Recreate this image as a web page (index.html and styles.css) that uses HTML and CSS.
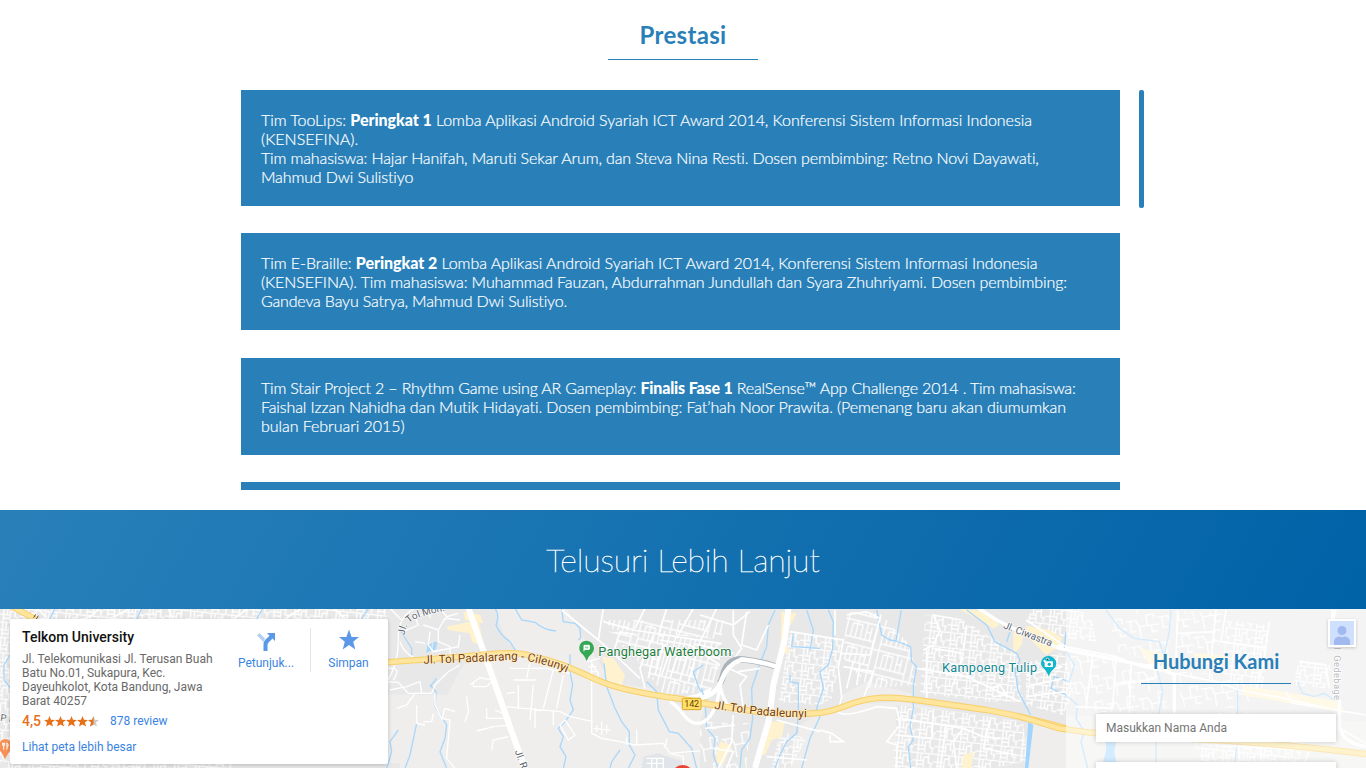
FILE: index.html
```html
<!DOCTYPE html>
<html lang="id">
<head>
<meta charset="utf-8">
<title>Prestasi</title>
<link rel="stylesheet" href="styles.css">
</head>
<body>
<section class="awards">
  <h2 class="heading">Prestasi</h2>
  <div class="awards-view">
    <div class="award-list">
      <p class="award"><span class="snug">Tim TooLips: <b>Peringkat 1</b> Lomba Aplikasi Android Syariah ICT Award 2014, Konferensi Sistem Informasi Indonesia</span> (KENSEFINA).<br><span class="firm">Tim mahasiswa: Hajar Hanifah, Maruti Sekar Arum, dan Steva Nina Resti. Dosen pembimbing: Retno Novi Dayawati,<br>Mahmud Dwi Sulistiyo</span></p>
      <p class="award"><span class="snug">Tim E-Braille: <b>Peringkat 2</b> Lomba Aplikasi Android Syariah ICT Award 2014, Konferensi Sistem Informasi Indonesia</span><br><span class="close">(KENSEFINA). Tim mahasiswa: Muhammad Fauzan, Abdurrahman Jundullah dan Syara Zhuhriyami. Dosen pembimbing:</span><br><span class="tight">Gandeva Bayu Satrya, Mahmud Dwi Sulistiyo.</span></p>
      <p class="award"><span class="tight">Tim Stair Project 2 – Rhythm Game using AR Gameplay: <b>Finalis Fase 1</b> RealSense™ App Challenge 2014 . Tim mahasiswa:</span><br><span class="close">Faishal Izzan Nahidha dan Mutik Hidayati. Dosen pembimbing: Fat’hah Noor Prawita. (Pemenang baru akan diumumkan</span><br><span class="snug">bulan Februari 2015)</span></p>
      <p class="award"></p>
    </div>
    <div class="scroll-thumb"></div>
  </div>
</section>
<section class="more">Telusuri Lebih Lanjut</section>
<section class="location">
  <svg class="map" viewBox="0 609 1366 159" width="1366" height="159">
    <defs>
      <pattern id="streets" width="62" height="46" patternUnits="userSpaceOnUse" patternTransform="rotate(6)">
        <path d="M0 4H62M0 27H34M14 4V46M34 15V46M48 4V32H62M34 15H48M14 38H34M25 4V27M56 32V46" class="st"/>
      </pattern>
      <pattern id="rows" width="110" height="72" patternUnits="userSpaceOnUse" patternTransform="rotate(14)">
        <path d="M0 3H110M4 3V72M20 12V54M34 3V54M50 12V54M64 3V54M78 12V54M94 3V72M4 54H94M20 12H50M64 30H78" class="st"/>
      </pattern>
      <pattern id="loose" width="96" height="78" patternUnits="userSpaceOnUse" patternTransform="rotate(-9)">
        <path d="M0 20H30L38 40H96M38 40V78M62 8V40M62 8H84V24M12 20V52H26M74 40V60H90" class="st"/>
      </pattern>
      <path id="cileunyi" d="M130 176Q290 172 400 164Q480 168 568 206"/>
      <path id="padaleunyi" d="M42 311Q120 324 190 331T360 337"/>
      <path id="tolmoh" d="M74 91Q75 55 110 40T226 12"/>
    </defs>
    <rect y="609" width="1366" height="159" fill="#efeeed"/>

    <!-- western edge -->
    <g transform="translate(0 605) scale(.33333)">
      <path d="M0 0H1200V45H0ZM0 45H32V489H0ZM0 475H1200V489H0Z" fill="#e8e8e8"/>
      <path d="M0 0H1200V45H0ZM0 45H32V489H0ZM0 475H700V489H0Z" fill="url(#streets)"/>
      <path d="M110 10L145 42M230 45Q280 40 295 10M330 42L390 10M520 45L505 10M700 42L745 10M850 45L905 10M1000 10L1040 45" class="st main"/>
      <path d="M165 10L150 42M425 10L410 44M788 10L770 42M1105 10L1085 42M30 150L12 180V225L32 250" class="river"/>
      <path d="M28 0L105 42" class="toll-edge"/><path d="M28 0L105 42" class="toll"/>
      <path d="M101 38L107 28M109 42L115 32" stroke="#6b4a2b" stroke-width="3"/>
      <path d="M15 462L4 442Q-7 430-2 416Q4 402 16 402Q35 405 35 423Q35 435 25 445Z" fill="#f99157"/>
      <path d="M8 413V421Q11 426 14 421V413M11 414V434M21 413V434M21 414Q26 418 24 424H21" fill="none" stroke="#fff" stroke-width="3"/>
    </g>

    <!-- central area -->
    <g transform="translate(380 605) scale(.33333)">
      <path d="M20 0H345Q358 90 405 132L340 150L250 180L200 270L20 268Z" fill="#e8e8e8"/>
      <path d="M555 0H1040V300H900L820 250L700 235L650 160L600 80Z" fill="#e8e8e8"/>
      <path d="M790 455L835 445L910 470L920 490H785Z" fill="#e1e4e8"/>
      <path d="M670 45H1040V105L820 85L700 75Z" fill="url(#rows)"/>
      <path d="M685 80L820 85L1020 115V260L850 270L795 190Z" fill="url(#rows)"/>
      <path d="M200 65L295 45L312 125L275 110L270 85L205 75ZM250 20L300 30L310 55L255 45Z" fill="#fff2cc"/>
      <path d="M667 155L700 160L735 210L725 240L680 225Z" fill="#fff2cf"/>
      <path d="M142 120L156 115L153 137L139 143ZM160 112L172 110L168 132L157 138Z" fill="#a8d8ff"/>
      <path d="M345 10Q360 30 348 60Q360 90 390 110L410 142M405 10L425 45L465 52Q490 75 528 78M545 10L550 50L585 55L600 70L602 98L595 105M570 148V200L578 240L570 285L580 315L555 350L535 370L550 395L540 425L558 455L550 490M672 175L680 245L705 310L725 350L748 380V420L765 450L745 490M800 230L830 260L835 315L868 380L895 385L935 430L950 490M970 180L940 200L955 245L980 290L975 355L1020 400M60 75L95 130V150M150 240L168 260L165 305L200 360L195 400L180 440L200 490M110 355L90 450L75 490M55 375L30 410L35 440L20 490M170 220L150 245M720 435L695 470L690 490" class="river"/>
      <path d="M55 110Q50 35 105 10M55 110Q55 175 20 232M60 110Q75 155 130 168M20 0L65 45M25 190Q68 185 40 225M70 80L115 60L105 35L145 25M130 60L175 75L195 40L240 45M150 80L145 120L160 140L235 125L240 90M175 75V110L210 125V165M105 110L135 115M150 15V40M180 10L200 35L235 25M20 230L55 232L85 265H155L165 240L205 200L240 180M30 255L80 245L120 230M120 230L125 265M105 265L80 300L50 310M165 265V300L185 340L210 345L200 460L225 490M185 345L195 310L225 320M110 300V355L135 360M130 350H155L160 325" class="st"/>
      <path d="M270 240L300 218L340 225L320 245L280 245V235M260 275L265 320L255 350M380 305L430 310L540 320L570 335L640 350M320 310V340H375M345 315L380 330M290 378L340 365L395 360M335 435L340 405L385 395M390 190H500L570 205M400 225H470M415 240V310M450 170L440 220M460 240L450 345M520 195L490 310M550 210L530 310M465 310V370M520 320V360M380 265L405 262M540 360L555 345L585 390L565 405ZM635 165V385L665 400L720 410L765 420L850 415L870 445L1040 430M640 370L690 375M650 360V380M665 350V390M680 360V385M740 395V420M770 375V420M870 445L910 455V490M800 460H850V490M800 475H850M815 460V490M830 460V490M860 400L855 430M970 405L980 440M635 175L655 205L650 235M620 170L660 160M650 185H625M650 200H630" class="st"/>
      <path d="M545 15L655 105L700 145L780 220M670 10L655 105M670 50L760 75L1040 118M765 70L795 10M835 90L860 10M890 100L940 10M960 110L1010 10M820 90L780 190L795 250M840 105L930 120L1020 180M700 145L720 80L770 90M800 140L820 145L805 220M850 120L825 210M875 125L845 210M900 130L870 220M925 140L900 225M950 145L925 230" class="st main"/>
      <path d="M262 0L395 380L435 490" class="avenue"/>
      <path d="M870 290C910 310 910 350 950 355Q990 355 1000 305M900 280Q990 275 1040 215" class="avenue thin"/>
      <path d="M20 172Q210 158 320 148T455 155C570 175 620 218 690 240S840 275 1040 300" class="toll-edge"/>
      <path d="M20 172Q210 158 320 148T455 155C570 175 620 218 690 240S840 275 1040 300" class="toll"/>
      <path d="M620 168Q614 151 603 143Q596 133 598 126Q600 108 620 107Q640 109 642 129Q642 141 635 146Q624 154 620 168Z" fill="#34a853"/>
      <path d="M612 139V121H628V133H612" fill="#fff" stroke="#fff" stroke-width="3"/>
      <path d="M615 125H625V130H615Z" fill="#9bd3aa"/>
      <circle cx="908" cy="514" r="34" fill="#ea4335"/>
    </g>

    <!-- eastern area -->
    <g transform="translate(700 605) scale(.33333)">
      <path d="M75 0H1098V380L990 400L800 325L600 290L440 300L370 315L300 360L270 489H0V350L60 180Z" fill="#e8e8e8"/>
      <path d="M590 300L970 350L980 489H580Z" fill="#e8e8e8"/>
      <path d="M995 350L1098 375V489H985Z" fill="#efeeed"/>
      <path d="M500 230L650 270L560 285L430 310L425 270ZM430 310L570 310L590 400L580 489H315Q345 400 350 350Z" fill="#efeeed"/>
      <path d="M270 80L430 105L420 170L395 280L360 300L235 290Z" fill="url(#streets)"/>
      <path d="M440 20L540 25L635 125L650 240L510 250L430 160Z" fill="url(#rows)"/>
      <path d="M675 30L790 45L950 145L970 290L870 290L660 265Z" fill="url(#streets)"/>
      <path d="M590 300L800 325L970 350L980 470L880 489H580Z" fill="url(#streets)"/>
      <path d="M15 350L150 355L140 489H0V375Z" fill="url(#loose)"/>
      <path d="M240 380L320 400L270 489H215Z" fill="url(#streets)"/>
      <path d="M245 20L290 25L250 100L270 140L240 150ZM205 350L255 350L245 395L215 405L195 450L175 450ZM775 10L850 20L900 60L880 70ZM940 80L970 90L965 120L940 150ZM790 450L820 440L815 489H785ZM60 410L95 420L70 480L45 470Z" fill="#fff2cf"/>
      <path d="M225 15L205 60L200 125L180 175L155 250L158 340L150 400L125 435L120 489M320 15L340 75L330 135M385 15L400 50L398 130L385 180L360 200L370 250L350 310L360 335L330 400L305 489M280 85L275 125L360 130M270 210V230L295 235V330L290 385L260 410L240 450L225 489M530 15L545 90L570 105L588 108L604 15M588 108L632 125L635 170L650 185L640 240V310L630 365L640 405L625 425L632 489M800 15L860 60L885 110L950 145L960 165L945 195L955 260L992 330M920 110L930 80M5 250L15 290L20 370L45 400L40 450L55 489" class="river"/>
      <path d="M985 350L1000 360L985 489H975Z" fill="#9fd5ff"/>
      <path d="M270 80L430 105L415 190L425 275L415 320Q430 340 530 305L590 310L600 360L560 410L590 420V489M405 15V90M440 30L500 20L540 40L510 150L425 145M430 185L520 200L490 280M460 170L440 250M480 175L470 240M670 135L700 120L720 75L700 30L785 45M680 130V280M650 190L800 215L960 290M700 130L790 145L760 240M800 60L790 140M600 340L790 370L850 395L900 400M700 325L695 400L590 390M740 360L720 489M790 370L760 410L770 489M870 345L850 430L950 450M360 375L395 385L430 410H390V390M230 345L360 380M100 330L95 410L55 489M15 370L105 360M40 430L100 440L80 489M200 455L320 465M0 30L100 60L150 20M0 120L100 145M100 15V90L125 130L95 170M140 20L125 120L170 135L205 60M85 190L140 215L120 240L130 310M115 200L180 190M870 250L900 240L920 270L880 275" class="st main"/>
      <path d="M60 235Q66 226 68 215Q80 160 130 163Q180 169 230 185" class="casing"/>
      <path d="M0 280Q50 270 65 225T125 163Q180 169 230 185" class="avenue ramp"/>
      <path d="M60 235Q70 315 125 322M0 355Q50 340 60 240" class="avenue thin"/>
      <path d="M265 10L255 100L220 240L208 340L165 489" class="avenue"/>
      <path d="M820 0L890 45L960 80L1098 130" class="avenue thin"/>
      <path d="M0 294C115 310 200 335 355 324Q385 322 430 305C530 265 590 280 650 285L860 315Q950 330 1098 370" class="toll-edge"/>
      <path d="M0 294C115 310 200 335 355 324Q385 322 430 305C530 265 590 280 650 285L860 315Q950 330 1098 370" class="toll"/>
    </g>

    <!-- area behind the contact form -->
    <g transform="translate(1026 605) scale(.33333)">
      <path d="M120 0H1020V350L550 330L370 340L120 330Z" fill="#e8e8e8"/>
      <path d="M20 10H160L200 50L210 110L120 100L0 50ZM0 175L115 140L145 270L110 330L0 300Z" fill="url(#streets)"/>
      <path d="M125 130L240 150L390 190L430 310L190 325L130 250Z" fill="url(#loose)"/>
      <path d="M240 20L440 15L425 180L275 140ZM455 20H590L570 180L450 175ZM460 200L640 210L680 310L460 305Z" fill="url(#loose)"/>
      <path d="M600 45L730 60L710 250L590 235ZM820 165L920 180L900 250L800 240ZM460 330L660 320L850 350L820 489H540Z" fill="url(#streets)"/>
      <path d="M0 62L70 75L110 100L90 130L60 150L0 90ZM340 130L430 150L435 200L380 195ZM500 145L600 150L595 175L520 170ZM650 240L800 265L940 290L960 325L850 305L650 270Z" fill="#fff2cf"/>
      <path d="M120 80L115 130L145 180L130 230L85 215L75 250L120 270L155 300L150 340L175 380L165 410L185 489M240 15L280 70L325 100L400 110L415 155L395 200L410 260L400 320L390 370V489M435 15L430 80L415 150M635 250V400L625 489M815 230L830 265L865 275L895 265L925 285" class="river"/>
      <path d="M240 410H270L265 440L275 489H225L240 440Z" fill="#a6d8ff"/>
      <path d="M0 45L120 125L270 155L345 185L445 205L570 230L640 255L750 275L930 315L1020 330M445 205V330M450 160L455 15M455 85L570 80M570 15L550 220M730 50L710 185L690 255M600 15L585 110L720 130M780 260L800 295L940 315M820 170L900 180L910 250M930 15L920 50M940 290V370L1020 415M640 430V489M550 420L850 435L830 489M705 420V489M200 150L180 310M270 155L260 310L150 305M315 180L310 325M275 240L390 220M0 210L110 185M0 245L110 220M0 275L120 260" class="st main"/>
      <path d="M-30 75L100 130L355 182H390L445 210V320M940 285V370Q955 415 1020 425M920 15V60" class="avenue thin"/>
      <path d="M-20 335L0 340L100 370Q190 385 280 390L560 405Q750 415 1020 447" class="toll-edge"/>
      <path d="M-20 335L0 340L100 370Q190 385 280 390L560 405Q750 415 1020 447" class="toll"/>
      <path d="M68 214Q61 196 51 188Q44 181 45 173Q48 154 68 152Q90 156 91 176Q90 188 82 193Q72 200 68 214Z" fill="#12b5c9"/>
      <rect x="56" y="169" width="25" height="17" rx="2" fill="#fff"/><circle cx="70" cy="178" r="5" fill="#12b5c9"/>
      <path d="M52 168H60M56 164V172M60 163L65 159L70 165" stroke="#fff" stroke-width="3"/>
    </g>

    <!-- labels -->
    <g transform="translate(0 605) scale(.33333)">
      <text x="0" y="347" font-size="29" class="road-label" transform="rotate(8 0 347)">P In</text>
    </g>
    <g transform="translate(380 605) scale(.33333)">
      <rect x="907" y="280" width="56" height="34" rx="3" fill="#ffdf65" stroke="#d9a72c" stroke-width="3"/>
      <text x="913" y="306" font-size="27" textLength="44" class="shield">142</text>
      <text class="toll-label" font-size="35"><textPath href="#cileunyi" textLength="436">Jl. Tol Padalarang - Cileunyi</textPath></text>
      <text class="road-label" font-size="30"><textPath href="#tolmoh">Jl. Tol Moh.</textPath></text>
      <text class="road-label" font-size="30" transform="translate(404 439) rotate(70)">Jl. R</text>
      <text x="655" y="154" font-size="38" textLength="399" class="place green">Panghegar Waterboom</text>
    </g>
    <g transform="translate(700 605) scale(.33333)">
      <text class="toll-label" font-size="35"><textPath href="#padaleunyi" textLength="280">Jl. Tol Padaleunyi</textPath></text>
      <text x="726" y="200" font-size="38" textLength="285" class="place teal">Kampoeng Tulip</text>
      <text class="road-label" font-size="30" textLength="155" transform="translate(908 69) rotate(21)">Jl. Ciwastra</text>
    </g>
    <g transform="translate(1026 605) scale(.33333)">
      <text class="road-label faded" font-size="28" textLength="175" transform="translate(924 110) rotate(90)">Jl. Gedebage</text>
    </g>
  </svg>

  <div class="place-card">
    <div class="place-info">
      <strong class="place-name">Telkom University</strong>
      <p class="address">Jl. Telekomunikasi Jl. Terusan Buah Batu No.01, Sukapura, Kec. Dayeuhkolot, Kota Bandung, Jawa Barat 40257</p>
      <div class="rating">
        <b>4,5</b>
        <svg width="55" height="11" viewBox="0 0 55 11">
          <defs><path id="star" d="M5.5 0L7 3.8L11 4.1L7.9 6.6L9 10.6L5.5 8.4L2 10.6L3.1 6.6L0 4.1L4 3.8Z"/>
          <clipPath id="half"><path d="M44 0H49.5V11H44Z"/></clipPath></defs>
          <g fill="#e7711b"><use href="#star"/><use href="#star" x="11"/><use href="#star" x="22"/><use href="#star" x="33"/></g>
          <use href="#star" x="44" fill="#ccc"/><g clip-path="url(#half)"><use href="#star" x="44" fill="#e7711b"/></g>
        </svg>
        <span class="link">878 review</span>
      </div>
      <span class="link">Lihat peta lebih besar</span>
    </div>
    <div class="action directions">
      <svg width="22" height="22" viewBox="0 0 22 22"><path d="M2 4.500L4.500 2L10 7.500L8.500 11Z" fill="#b2d0f7"/><path d="M8.500 20V13Q8.500 10.500 10.500 8.500L14.500 4.800L12 2H20V10L17.500 7.500L14 11Q12.500 12.500 12.500 14V20Z" fill="#5b98e8"/></svg>
      <span class="link">Petunjuk...</span>
    </div>
    <div class="action save">
      <svg width="22" height="22" viewBox="0 0 22 22"><path d="M11 .5L13.600 8H21L15.200 12.700L17.300 20.500L11 15.900L4.700 20.500L6.800 12.700L1 8H8.400Z" fill="#5b98e8"/></svg>
      <span class="link">Simpan</span>
    </div>
  </div>

  <div class="contact">
    <h2 class="heading small">Hubungi Kami</h2>
    <input class="field" placeholder="Masukkan Nama Anda">
    <input class="field">
  </div>
  <div class="account"><svg width="24" height="24" viewBox="0 0 24 24"><circle cx="12" cy="9.500" r="4.500" fill="#a1b9ee"/><path d="M4 24V20Q5 15.500 10 15.500L12 16.500L14 15.500Q19 15.500 20 20V24Z" fill="#a1b9ee"/></svg></div>
</section>
</body>
</html>
```
FILE: styles.css
```css
* { box-sizing: border-box; }
body { margin: 0; width: 1366px; height: 768px; overflow: hidden; background: #fff; font: 300 16px/19px Lato, sans-serif; font-variant-ligatures: none; }
.awards { height: 510px; padding-top: 20px; }
.heading { width: 150px; height: 40px; margin: 0 auto 30px; border-bottom: 1px solid #2980b9; color: #2980b9; font-size: 24px; line-height: 30px; font-weight: 700; letter-spacing: .3px; text-align: center; white-space: nowrap; }
.awards-view { display: flex; gap: 19px; height: 400px; margin-left: 241px; overflow: hidden; }
.award-list { width: 879px; display: flex; flex-direction: column; gap: 27.32px; }
.award { flex: none; margin: 0; padding: 20px; min-height: 97px; background: #2980b9; color: #fff; -webkit-text-stroke: .2px #fff; }
.award b { font-weight: 900; -webkit-text-stroke: 0; }
.snug { letter-spacing: -.05px; }
.close { letter-spacing: -.1px; }
.firm { letter-spacing: -.13px; }
.tight { letter-spacing: -.17px; }
.scroll-thumb { width: 5px; height: 118px; border-radius: 2px; background: #2980b9; }
.more { height: 99px; background: linear-gradient(120deg, #2980b9, #0062a7 100%); color: #fff; font-size: 32px; line-height: 99px; letter-spacing: -.15px; font-weight: 100; text-align: center; -webkit-text-stroke: .5px #fff; }
.location { position: relative; height: 159px; overflow: hidden; font-family: Roboto, sans-serif; font-weight: 400; }
.map { display: block; }

.st { fill: none; stroke: #fff; stroke-width: 4; }
.main { stroke-width: 5; }
.avenue { fill: none; stroke: #fff; stroke-width: 18; }
.thin { stroke-width: 10; }
.ramp { stroke-width: 14; }
.casing { fill: none; stroke: #aab4bb; stroke-width: 19; }
.river { fill: none; stroke: #a9d7fb; stroke-width: 4; }
.toll-edge { fill: none; stroke: #f7cf6b; stroke-width: 19; }
.toll { fill: none; stroke: #ffe69c; stroke-width: 13; }
.toll-label, .road-label, .place { font-family: Roboto, sans-serif; paint-order: stroke; stroke: #fff; stroke-width: 4; }
.toll-label { fill: #773c10; stroke: #fff2cc; }
.road-label { fill: #5d666e; }
.faded { fill: #6d757c; }
.green { fill: #1c7d3c; }
.teal { fill: #118793; }
.shield { fill: #684000; }

.place-card { position: absolute; left: 10px; top: 10px; width: 378px; height: 145px; padding: 9px 0 9px 12px; display: flex; background: #fff; border-radius: 2px; box-shadow: 0 1px 4px rgba(0, 0, 0, .2); font-size: 12px; line-height: 14px; }
.place-info { flex: none; width: 205px; }
.place-name { display: block; color: #111; font-size: 14px; line-height: 19px; font-weight: 500; }
.address { width: 200px; margin: 5px 0; color: #696969; }
.rating { display: flex; align-items: center; height: 16px; margin-bottom: 11px; }
.rating b { width: 22px; color: #e7711b; font-size: 14px; font-weight: 500; }
.rating .link { margin-left: 11px; }
.link { color: #3a84df; }
.action { flex: none; display: flex; flex-direction: column; align-items: center; gap: 5px; height: 44px; padding-top: 1px; }
.directions { width: 83px; padding-right: 5px; }
.directions svg { margin-top: 2px; margin-bottom: -2px; }
.save { width: 76px; border-left: 1px solid #e5e5e5; }
.contact { position: absolute; top: 0; right: 0; width: 300px; height: 159px; padding: 36px 30px 0; background: rgba(255, 255, 255, .5); }
.small { height: 39px; margin-bottom: 30px; font-family: Lato, sans-serif; font-size: 20px; line-height: 32px; letter-spacing: 0; }
.field { display: block; width: 240px; height: 28px; margin: 0 0 20px; padding: 0 10px; border: 0; background: #fff; box-shadow: 0 0 5px rgba(0, 0, 0, .2); font: 12px Roboto, sans-serif; }
.field::placeholder { color: #757575; }
.account { position: absolute; left: 1328px; top: 10px; width: 28px; height: 28px; border: 2px solid #fff; background: #cfe0ff; box-shadow: 0 1px 3px rgba(0, 0, 0, .2); }
.account svg { display: block; }
```
